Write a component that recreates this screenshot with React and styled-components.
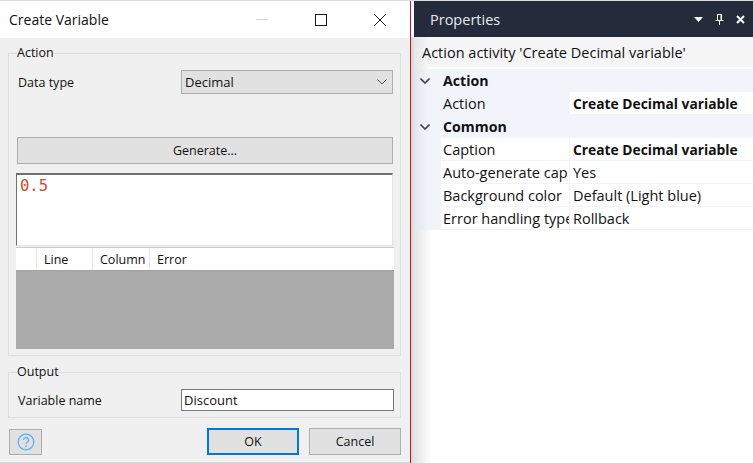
import React from "react";
import styled, { createGlobalStyle } from "styled-components";

const GlobalStyle = createGlobalStyle`
  html, body {
    margin: 0;
    padding: 0;
    background: #fff;
  }
  * {
    box-sizing: border-box;
  }
`;

const font = `"Open Sans", "Noto Sans", sans-serif`;

const properties = [
  {
    name: "Action",
    rows: [{ label: "Action", value: "Create Decimal variable", bold: true, tinted: true }],
  },
  {
    name: "Common",
    rows: [
      { label: "Caption", value: "Create Decimal variable", bold: true },
      { label: "Auto-generate cap", value: "Yes" },
      { label: "Background color", value: "Default (Light blue)" },
      { label: "Error handling type", value: "Rollback" },
    ],
  },
];

const App = () => {
  return (
    <Page>
      <GlobalStyle />
      <Dialog>
        <TitleBar>
          <WindowTitle>Create Variable</WindowTitle>
          <WindowButtons>
            <svg width="14" height="14" viewBox="0 0 14 14">
              <path d="M1 6.5h12" stroke="#d0d0d0" strokeWidth="1" />
            </svg>
            <svg width="14" height="14" viewBox="0 0 14 14">
              <rect x="1.5" y="1.5" width="11" height="11" fill="none" stroke="#1a1a1a" />
            </svg>
            <svg width="14" height="14" viewBox="0 0 14 14">
              <path d="M1 1l12 12M13 1L1 13" stroke="#1a1a1a" strokeWidth="1" />
            </svg>
          </WindowButtons>
        </TitleBar>
        <DialogBody>
          <ActionGroup>
            <GroupLegend>Action</GroupLegend>
            <FieldRow>
              <FieldLabel>Data type</FieldLabel>
              <SelectBox>
                Decimal
                <svg width="10" height="6" viewBox="0 0 10 6">
                  <path d="M0.5 0.5L5 5L9.5 0.5" fill="none" stroke="#555" strokeWidth="1" />
                </svg>
              </SelectBox>
            </FieldRow>
            <GenerateButton>Generate...</GenerateButton>
            <Editor>0.5</Editor>
            <ErrorHeader>
              <HeaderCell $width={21} />
              <HeaderCell $width={56}>Line</HeaderCell>
              <HeaderCell $width={57}>Column</HeaderCell>
              <HeaderCell>Error</HeaderCell>
            </ErrorHeader>
            <ErrorList />
          </ActionGroup>
          <OutputGroup>
            <OutputLegend>Output</OutputLegend>
            <OutputRow>
              <FieldLabel>Variable name</FieldLabel>
              <TextBox>Discount</TextBox>
            </OutputRow>
          </OutputGroup>
          <ButtonBar>
            <HelpButton aria-label="Help">
              <svg width="18" height="18" viewBox="0 0 18 18">
                <circle cx="9" cy="9" r="7.8" fill="none" stroke="#5db2f5" strokeWidth="1.3" />
                <path
                  d="M6.5 7a2.5 2.5 0 1 1 3.7 2.2C9.4 9.7 9 10.1 9 11"
                  fill="none"
                  stroke="#5db2f5"
                  strokeWidth="1.3"
                />
                <circle cx="9" cy="13.2" r="0.9" fill="#5db2f5" />
              </svg>
            </HelpButton>
            <Spacer />
            <DialogButton $primary>OK</DialogButton>
            <DialogButton>Cancel</DialogButton>
          </ButtonBar>
        </DialogBody>
      </Dialog>
      <Divider />
      <Panel>
        <PanelHeader>
          <PanelTitle>Properties</PanelTitle>
          <PanelTools>
            <svg width="9" height="5" viewBox="0 0 9 5">
              <path d="M0 0h9L4.5 5z" fill="#fff" />
            </svg>
            <svg width="9" height="11" viewBox="0 0 9 11">
              <path d="M2 .5h5M2.5.5v5.5M6.5.5v5.5M0.5 6.5h8M4.5 6.5V11" fill="none" stroke="#fff" />
              <path d="M5.5 1v5h1.5V1z" fill="#fff" />
            </svg>
            <svg width="9" height="9" viewBox="0 0 9 9">
              <path d="M1 1l7 7M8 1L1 8" stroke="#fff" strokeWidth="2" />
            </svg>
          </PanelTools>
        </PanelHeader>
        <Subject>Action activity 'Create Decimal variable'</Subject>
        <PropertyGrid>
          {properties.map((group) => (
            <React.Fragment key={group.name}>
              <GroupRow>
                <Chevron width="10" height="6" viewBox="0 0 10 6">
                  <path d="M0.5 0.5L5 5L9.5 0.5" fill="none" stroke="#444" strokeWidth="1.6" />
                </Chevron>
                {group.name}
              </GroupRow>
              {group.rows.map((row) => (
                <PropertyRow key={row.label}>
                  <PropertyLabel $tinted={row.tinted}>{row.label}</PropertyLabel>
                  <PropertyValue $bold={row.bold}>{row.value}</PropertyValue>
                </PropertyRow>
              ))}
            </React.Fragment>
          ))}
        </PropertyGrid>
      </Panel>
    </Page>
  );
};

const Page = styled.div`
  display: flex;
  width: 753px;
  height: 463px;
  overflow: hidden;
  background: #fff;
  border-top: 1px solid #dcdcdc;
  font-family: ${font};
  font-size: 12.5px;
  color: #111;
`;

const Dialog = styled.div`
  display: flex;
  flex-direction: column;
  width: 410px;
  flex: none;
  background: #f0f0f0;
  border-bottom: 1px solid #d8d8d8;
`;

const TitleBar = styled.div`
  display: flex;
  align-items: center;
  justify-content: space-between;
  height: 37px;
  flex: none;
  padding: 0 23px 0 9px;
  background: #fff;
`;

const WindowTitle = styled.div`
  font-size: 14px;
`;

const WindowButtons = styled.div`
  display: flex;
  gap: 45px;
`;

const DialogBody = styled.div`
  display: flex;
  flex-direction: column;
  flex: 1;
  padding: 8px 9px 7px 8px;
`;

const ActionGroup = styled.fieldset`
  margin: 0;
  padding: 10px 7px 0 8px;
  height: 310px;
  flex: none;
  border: 1px solid #dcdcdc;
`;

const OutputGroup = styled.fieldset`
  margin: 9px 0 0;
  padding: 10px 6px 0 9px;
  height: 53px;
  flex: none;
  border: 1px solid #dcdcdc;
`;

const GroupLegend = styled.legend`
  padding: 0;
  line-height: 14px;
`;

const OutputLegend = styled(GroupLegend)`
  margin-left: -1px;
`;

const FieldRow = styled.div`
  display: flex;
  align-items: center;
  justify-content: space-between;
  height: 24px;
  padding-left: 1px;
`;

const OutputRow = styled(FieldRow)`
  height: 22px;
  padding-left: 0;
`;

const FieldLabel = styled.span``;

const SelectBox = styled.div`
  display: flex;
  align-items: center;
  justify-content: space-between;
  width: 212px;
  height: 24px;
  padding: 0 5px 0 3px;
  background: #e1e1e1;
  border: 1px solid #adadad;
  font-size: 13px;
`;

const TextBox = styled.div`
  display: flex;
  align-items: center;
  width: 213px;
  height: 22px;
  padding: 0 2px;
  background: #fff;
  border: 1px solid #7a7a7a;
  font-size: 13px;
`;

const GenerateButton = styled.div`
  display: flex;
  align-items: center;
  justify-content: center;
  height: 27px;
  margin: 43px 0 9px 0;
  background: #e1e1e1;
  border: 1px solid #adadad;
`;

const Editor = styled.div`
  height: 73px;
  margin-left: -1px;
  padding: 0 3px;
  background: #fff;
  border-style: solid;
  border-width: 2px 1px 1px 1px;
  border-color: #707070 #e3e3e3 #e3e3e3 #707070;
  font-family: "DejaVu Sans Mono", "Liberation Mono", monospace;
  font-size: 15.5px;
  line-height: 22px;
  color: #c8502a;
`;

const ErrorHeader = styled.div`
  display: flex;
  height: 23px;
  margin: 1px -1px 0 -1px;
  background: #fff;
  border-top: 1px solid #c8c8c8;
`;

const HeaderCell = styled.div`
  display: flex;
  align-items: center;
  width: ${(p) => (p.$width ? `${p.$width}px` : "auto")};
  flex: ${(p) => (p.$width ? "none" : 1)};
  padding-left: 7px;
  border-right: ${(p) => (p.$width ? "1px solid #e6e6e6" : "none")};
`;

const ErrorList = styled.div`
  height: 79px;
  margin: 0 -1px;
  background: #ababab;
  border-top: 1px solid #a0a0a0;
`;

const ButtonBar = styled.div`
  display: flex;
  align-items: center;
  gap: 10px;
  margin-top: 10px;
  height: 27px;
  padding-left: 1px;
`;

const Spacer = styled.div`
  flex: 1;
`;

const HelpButton = styled.div`
  display: flex;
  align-items: center;
  justify-content: center;
  width: 33px;
  height: 26px;
  margin-top: 1px;
  background: #e1e1e1;
  border: 1px solid #adadad;
`;

const DialogButton = styled.div`
  display: flex;
  align-items: center;
  justify-content: center;
  width: 92px;
  height: 27px;
  background: #e1e1e1;
  border: ${(p) => (p.$primary ? "2px solid #0078d7" : "1px solid #adadad")};
`;

const Divider = styled.div`
  width: 4px;
  flex: none;
  border-left: 1px solid #c3122f;
  background:
    linear-gradient(#fff, #fff) top / 100% 36px no-repeat,
    linear-gradient(to right, #d4d4d4, #e2e2e2);
`;

const Panel = styled.div`
  display: flex;
  flex-direction: column;
  flex: 1;
  min-width: 0;
  font-size: 14.5px;
`;

const PanelHeader = styled.div`
  display: flex;
  align-items: center;
  justify-content: space-between;
  height: 36px;
  flex: none;
  padding: 0 8px 0 16px;
  background: #242b3b;
`;

const PanelTitle = styled.div`
  color: #e6e9ef;
`;

const PanelTools = styled.div`
  display: flex;
  align-items: center;
  gap: 12px;
`;

const Subject = styled.div`
  display: flex;
  align-items: center;
  height: 30px;
  flex: none;
  padding-left: 8px;
  background: linear-gradient(to right, #e6e6e6, #f5f5f5 14px);
`;

const PropertyGrid = styled.div`
  display: flex;
  flex-direction: column;
  flex: 1;
  padding-top: 2px;
  background: linear-gradient(to right, #e4e4e4, #fff 18px);
`;

const GroupRow = styled.div`
  display: flex;
  align-items: center;
  gap: 13px;
  height: 23px;
  padding-left: 6px;
  background: linear-gradient(to right, #e2e5ea, #f1f5fb 14px);
  font-size: 14.2px;
  font-weight: 700;
`;

const Chevron = styled.svg`
  flex: none;
`;

const PropertyRow = styled.div`
  display: grid;
  grid-template-columns: 129px 1fr;
  height: 23px;
  padding-left: 27px;
  background: linear-gradient(to right, #e2e5ea, #f1f5fb 14px);
`;

const PropertyLabel = styled.div`
  display: flex;
  align-items: center;
  overflow: hidden;
  white-space: nowrap;
  padding-left: 2px;
  background: ${(p) => (p.$tinted ? "#f1f5fb" : "#fff")};
  border-right: 1px solid #f0f3f8;
  border-bottom: 1px solid #f0f3f8;
`;

const PropertyValue = styled.div`
  display: flex;
  align-items: center;
  padding-left: 3px;
  background: #fff;
  border-bottom: 1px solid #f0f3f8;
  font-size: ${(p) => (p.$bold ? "13.8px" : "14.5px")};
  font-weight: ${(p) => (p.$bold ? 700 : 400)};
`;

export default App;
